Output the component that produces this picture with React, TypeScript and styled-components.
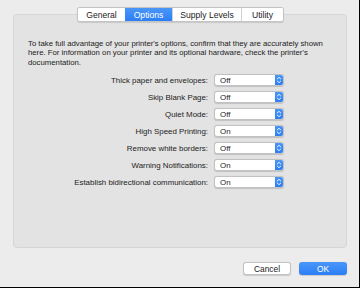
import React from 'react';
import styled, { createGlobalStyle } from 'styled-components';

const GlobalStyle = createGlobalStyle`
  html, body {
    margin: 0;
    padding: 0;
  }
  body {
    font-family: "Liberation Sans", Arial, sans-serif;
    color: #222;
  }
`;

const Window = styled.div`
  width: 360px;
  height: 288px;
  box-sizing: border-box;
  background: #ececec;
  border-right: 1px solid #000;
  border-bottom: 1px solid #000;
  padding: 14px 12px 0 13px;
  display: flex;
  flex-direction: column;
`;

const Panel = styled.div`
  height: 234px;
  box-sizing: border-box;
  background: #e3e3e3;
  border: 1px solid #d6d6d6;
  border-radius: 4px;
  display: flex;
  flex-direction: column;
`;

const TabBar = styled.div`
  align-self: center;
  display: flex;
  margin-top: -8px;
  margin-left: 1px;
  height: 13px;
  background: #fff;
  border: 1px solid #c4c4c4;
  border-radius: 3px;
  box-shadow: 0 0.5px 1px rgba(0, 0, 0, 0.12);
  overflow: hidden;
`;

const Tab = styled.div<{ $active?: boolean; $w: number }>`
  width: ${p => p.$w}px;
  display: flex;
  align-items: center;
  justify-content: center;
  font-size: 8.6px;
  color: ${p => (p.$active ? '#fff' : '#222')};
  background: ${p => (p.$active ? 'linear-gradient(#4a96f8, #2b7ef5)' : '#fff')};
  border-left: ${p => (p.$active ? 'none' : '1px solid #d0d0d0')};
  &:first-child {
    border-left: none;
  }
`;

const Intro = styled.p`
  margin: 17px 0 0 14px;
  width: 312px;
  font-size: 7.75px;
  line-height: 9.4px;
  white-space: nowrap;
`;

const Rows = styled.div`
  margin-top: 7px;
  display: flex;
  flex-direction: column;
  gap: 5px;
`;

const Row = styled.div`
  display: flex;
  align-items: center;
  height: 12px;
`;

const Label = styled.div`
  width: 194px;
  text-align: right;
  font-size: 7.9px;
`;

const Select = styled.div`
  margin-left: 6px;
  width: 70px;
  height: 12px;
  box-sizing: border-box;
  display: flex;
  background: #fff;
  border: 0.5px solid #c2c2c2;
  border-radius: 3px;
  box-shadow: 0 0.5px 1px rgba(0, 0, 0, 0.15);
  overflow: hidden;
`;

const Value = styled.span`
  flex: 1;
  padding-left: 5px;
  font-size: 7.9px;
  line-height: 11px;
`;

const Stepper = styled.span`
  width: 8px;
  background: linear-gradient(#4a96f8, #2b7ef5);
  display: flex;
  align-items: center;
  justify-content: center;
`;

const Footer = styled.div`
  margin-top: 14px;
  display: flex;
  justify-content: flex-end;
  gap: 8px;
`;

const Button = styled.button<{ $primary?: boolean }>`
  width: 48px;
  height: 13px;
  padding: 0;
  font-family: "Liberation Sans", Arial, sans-serif;
  font-size: 8.4px;
  border-radius: 3px;
  border: ${p => (p.$primary ? 'none' : '0.5px solid #c2c2c2')};
  color: ${p => (p.$primary ? '#fff' : '#222')};
  background: ${p => (p.$primary ? 'linear-gradient(#4a96f8, #2b7ef5)' : '#fff')};
  box-shadow: 0 0.5px 1px rgba(0, 0, 0, 0.15);
`;

const Arrows = () => (
  <svg width="6" height="8" viewBox="0 0 6 8">
    <path d="M1.2 3 L3 1.3 L4.8 3 M1.2 5 L3 6.7 L4.8 5" fill="none" stroke="#fff" strokeWidth="0.9" strokeLinecap="round" strokeLinejoin="round" />
  </svg>
);

const options: [string, string][] = [
  ['Thick paper and envelopes:', 'Off'],
  ['Skip Blank Page:', 'Off'],
  ['Quiet Mode:', 'Off'],
  ['High Speed Printing:', 'On'],
  ['Remove white borders:', 'Off'],
  ['Warning Notifications:', 'On'],
  ['Establish bidirectional communication:', 'On'],
];

const tabs: [string, number][] = [
  ['General', 47],
  ['Options', 47],
  ['Supply Levels', 68],
  ['Utility', 41],
];

export default function App() {
  return (
    <>
      <GlobalStyle />
      <Window>
        <Panel>
          <TabBar>
            {tabs.map(([name, w]) => (
              <Tab key={name} $w={w} $active={name === 'Options'}>
                {name}
              </Tab>
            ))}
          </TabBar>
          <Intro>
            To take full advantage of your printer's options, confirm that they are accurately shown
            <br />
            here. For information on your printer and its optional hardware, check the printer's
            <br />
            documentation.
          </Intro>
          <Rows>
            {options.map(([label, value]) => (
              <Row key={label}>
                <Label>{label}</Label>
                <Select>
                  <Value>{value}</Value>
                  <Stepper>
                    <Arrows />
                  </Stepper>
                </Select>
              </Row>
            ))}
          </Rows>
        </Panel>
        <Footer>
          <Button>Cancel</Button>
          <Button $primary>OK</Button>
        </Footer>
      </Window>
    </>
  );
}
